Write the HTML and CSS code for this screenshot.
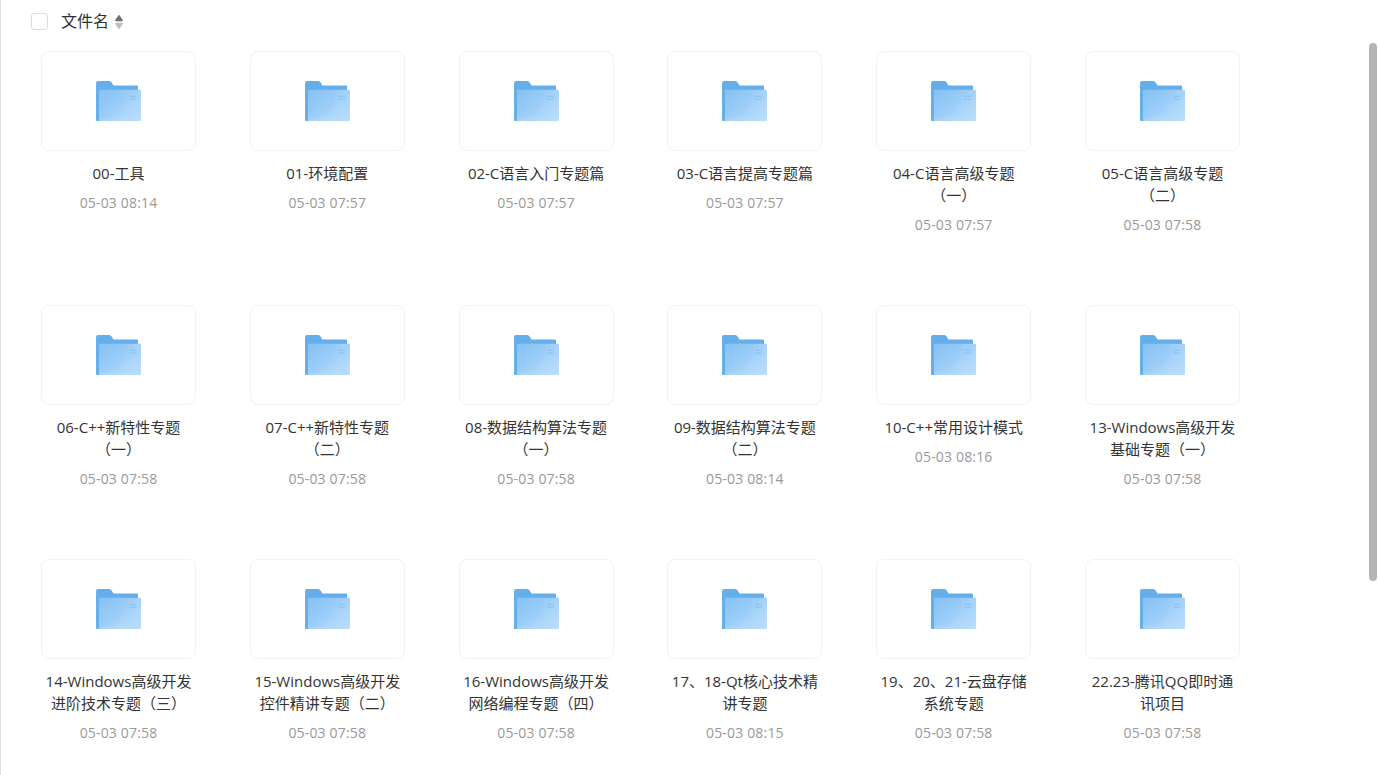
FILE: index.html
```html
<!DOCTYPE html>
<html lang="zh-CN">
<head>
    <meta charset="UTF-8">
    <title>文件列表</title>
    <link rel="stylesheet" href="styles.css">
</head>
<body>
    <svg class="defs" width="0" height="0">
        <defs>
            <linearGradient id="folderFront" x1="0" y1="0" x2="1" y2="1">
                <stop offset="0" stop-color="#85c1f3"/>
                <stop offset="1" stop-color="#b3dafe"/>
            </linearGradient>
            <clipPath id="frontClip">
                <path d="M3 9.500a.5.500 0 0 1 .5-.5H45a1 1 0 0 1 1 1V40a1 1 0 0 1-1 1H3z"/>
            </clipPath>
            <symbol id="folder" viewBox="0 0 46 42">
                <path d="M0 2a2 2 0 0 1 2-2h11.500a3 3 0 0 1 2.500 1.500l1.500 2.500a1 1 0 0 0 1 .5H42a1 1 0 0 1 1 1V41H1a1 1 0 0 1-1-1z" fill="#63aeeb"/>
                <path d="M3 9.500a.5.500 0 0 1 .5-.5H45a1 1 0 0 1 1 1V40a1 1 0 0 1-1 1H3z" fill="url(#folderFront)"/>
                <g clip-path="url(#frontClip)" fill="#ffffff" fill-opacity=".05">
                    <path d="M3 38h43v3H3z"/>
                    <path d="M32 9a29 29 0 0 1-29 29v3h43V9z"/>
                    <path d="M38 9a35 32 0 0 1-35 32h43V9z"/>
                </g>
                <path d="M34 15h7v1.300h-7zM34 17.800h7v1.300h-7z" fill="#8cc3f2"/>
            </symbol>
            <symbol id="sort-icon" viewBox="0 0 8 14">
                <path d="M3.300.4a1 1 0 0 1 1.400 0l3 4.600c.4.600 0 1.200-.6 1.200H.9C.3 6.200-.1 5.600.3 5z" fill="#6f6f6f"/>
                <path d="M3.300 13.600a1 1 0 0 0 1.400 0l3-4.600c.4-.6 0-1.200-.6-1.200H.9C.3 7.800-.1 8.400.3 9z" fill="#bdbdbd"/>
            </symbol>
        </defs>
    </svg>

    <div class="panel">
        <div class="list-head">
            <span class="check"></span>
            <span class="head-label">文件名</span>
            <svg class="sort"><use href="#sort-icon"/></svg>
        </div>

        <div class="grid">
            <div class="item">
                <div class="thumb"><svg class="icon"><use href="#folder"/></svg></div>
                <div class="name">00-工具</div>
                <div class="date">05-03 08:14</div>
            </div>
            <div class="item">
                <div class="thumb"><svg class="icon"><use href="#folder"/></svg></div>
                <div class="name">01-环境配置</div>
                <div class="date">05-03 07:57</div>
            </div>
            <div class="item">
                <div class="thumb"><svg class="icon"><use href="#folder"/></svg></div>
                <div class="name">02-C语言入门专题篇</div>
                <div class="date">05-03 07:57</div>
            </div>
            <div class="item">
                <div class="thumb"><svg class="icon"><use href="#folder"/></svg></div>
                <div class="name">03-C语言提高专题篇</div>
                <div class="date">05-03 07:57</div>
            </div>
            <div class="item">
                <div class="thumb"><svg class="icon"><use href="#folder"/></svg></div>
                <div class="name">04-C语言高级专题<br>（一）</div>
                <div class="date">05-03 07:57</div>
            </div>
            <div class="item">
                <div class="thumb"><svg class="icon"><use href="#folder"/></svg></div>
                <div class="name">05-C语言高级专题<br>（二）</div>
                <div class="date">05-03 07:58</div>
            </div>

            <div class="item">
                <div class="thumb"><svg class="icon"><use href="#folder"/></svg></div>
                <div class="name">06-C++新特性专题<br>（一）</div>
                <div class="date">05-03 07:58</div>
            </div>
            <div class="item">
                <div class="thumb"><svg class="icon"><use href="#folder"/></svg></div>
                <div class="name">07-C++新特性专题<br>（二）</div>
                <div class="date">05-03 07:58</div>
            </div>
            <div class="item">
                <div class="thumb"><svg class="icon"><use href="#folder"/></svg></div>
                <div class="name">08-数据结构算法专题<br>（一）</div>
                <div class="date">05-03 07:58</div>
            </div>
            <div class="item">
                <div class="thumb"><svg class="icon"><use href="#folder"/></svg></div>
                <div class="name">09-数据结构算法专题<br>（二）</div>
                <div class="date">05-03 08:14</div>
            </div>
            <div class="item">
                <div class="thumb"><svg class="icon"><use href="#folder"/></svg></div>
                <div class="name">10-C++常用设计模式</div>
                <div class="date">05-03 08:16</div>
            </div>
            <div class="item">
                <div class="thumb"><svg class="icon"><use href="#folder"/></svg></div>
                <div class="name">13-Windows高级开发<br>基础专题（一）</div>
                <div class="date">05-03 07:58</div>
            </div>

            <div class="item">
                <div class="thumb"><svg class="icon"><use href="#folder"/></svg></div>
                <div class="name">14-Windows高级开发<br>进阶技术专题（三）</div>
                <div class="date">05-03 07:58</div>
            </div>
            <div class="item">
                <div class="thumb"><svg class="icon"><use href="#folder"/></svg></div>
                <div class="name">15-Windows高级开发<br>控件精讲专题（二）</div>
                <div class="date">05-03 07:58</div>
            </div>
            <div class="item">
                <div class="thumb"><svg class="icon"><use href="#folder"/></svg></div>
                <div class="name">16-Windows高级开发<br>网络编程专题（四）</div>
                <div class="date">05-03 07:58</div>
            </div>
            <div class="item">
                <div class="thumb"><svg class="icon"><use href="#folder"/></svg></div>
                <div class="name">17、18-Qt核心技术精<br>讲专题</div>
                <div class="date">05-03 08:15</div>
            </div>
            <div class="item">
                <div class="thumb"><svg class="icon"><use href="#folder"/></svg></div>
                <div class="name">19、20、21-云盘存储<br>系统专题</div>
                <div class="date">05-03 07:58</div>
            </div>
            <div class="item">
                <div class="thumb"><svg class="icon"><use href="#folder"/></svg></div>
                <div class="name">22.23-腾讯QQ即时通<br>讯项目</div>
                <div class="date">05-03 07:58</div>
            </div>
        </div>
    </div>

    <div class="scrollbar"></div>
</body>
</html>
```

FILE: styles.css
```css
html, body {
    margin: 0;
    height: 100%;
    overflow: hidden;
    background: white;
}
body {
    font-family: "Open Sans", "Noto Sans CJK SC", sans-serif;
    color: #333;
}
.defs {
    display: block;
    height: 0;
}
.panel {
    height: 775px;
    border-left: 1px solid #ddd;
    box-sizing: border-box;
    overflow: hidden;
}
.list-head {
    display: flex;
    align-items: center;
    height: 43px;
    padding-left: 30px;
}
.check {
    width: 15px;
    height: 15px;
    border: 1px solid #dcdcdc;
    border-radius: 3px;
}
.head-label {
    margin: -2px 0 0 13px;
    font-size: 16px;
    line-height: 22px;
    color: #333;
}
.sort {
    width: 8px;
    height: 14px;
    margin-left: 6px;
}
.grid {
    display: grid;
    grid-template-columns: repeat(6, 155px);
    grid-auto-rows: 254px;
    column-gap: 53.8px;
    padding: 8px 0 0 40px;
}
.item {
    width: 155px;
    text-align: center;
}
.thumb {
    display: flex;
    align-items: center;
    justify-content: center;
    box-sizing: border-box;
    height: 100px;
    padding-top: 1px;
    border: 1px solid #f3f3f3;
    border-radius: 8px;
}
.icon {
    width: 45px;
    height: 41px;
}
.name {
    margin-top: 11px;
    font-size: 15px;
    line-height: 22px;
    color: #333;
}
.date {
    margin-top: 7.500px;
    font-size: 14px;
    letter-spacing: .17px;
    line-height: 22px;
    color: #999;
}
.scrollbar {
    position: absolute;
    top: 43px;
    left: 1369px;
    width: 8px;
    height: 538px;
    border-radius: 4px;
    background: #b5b5b9;
}
```
